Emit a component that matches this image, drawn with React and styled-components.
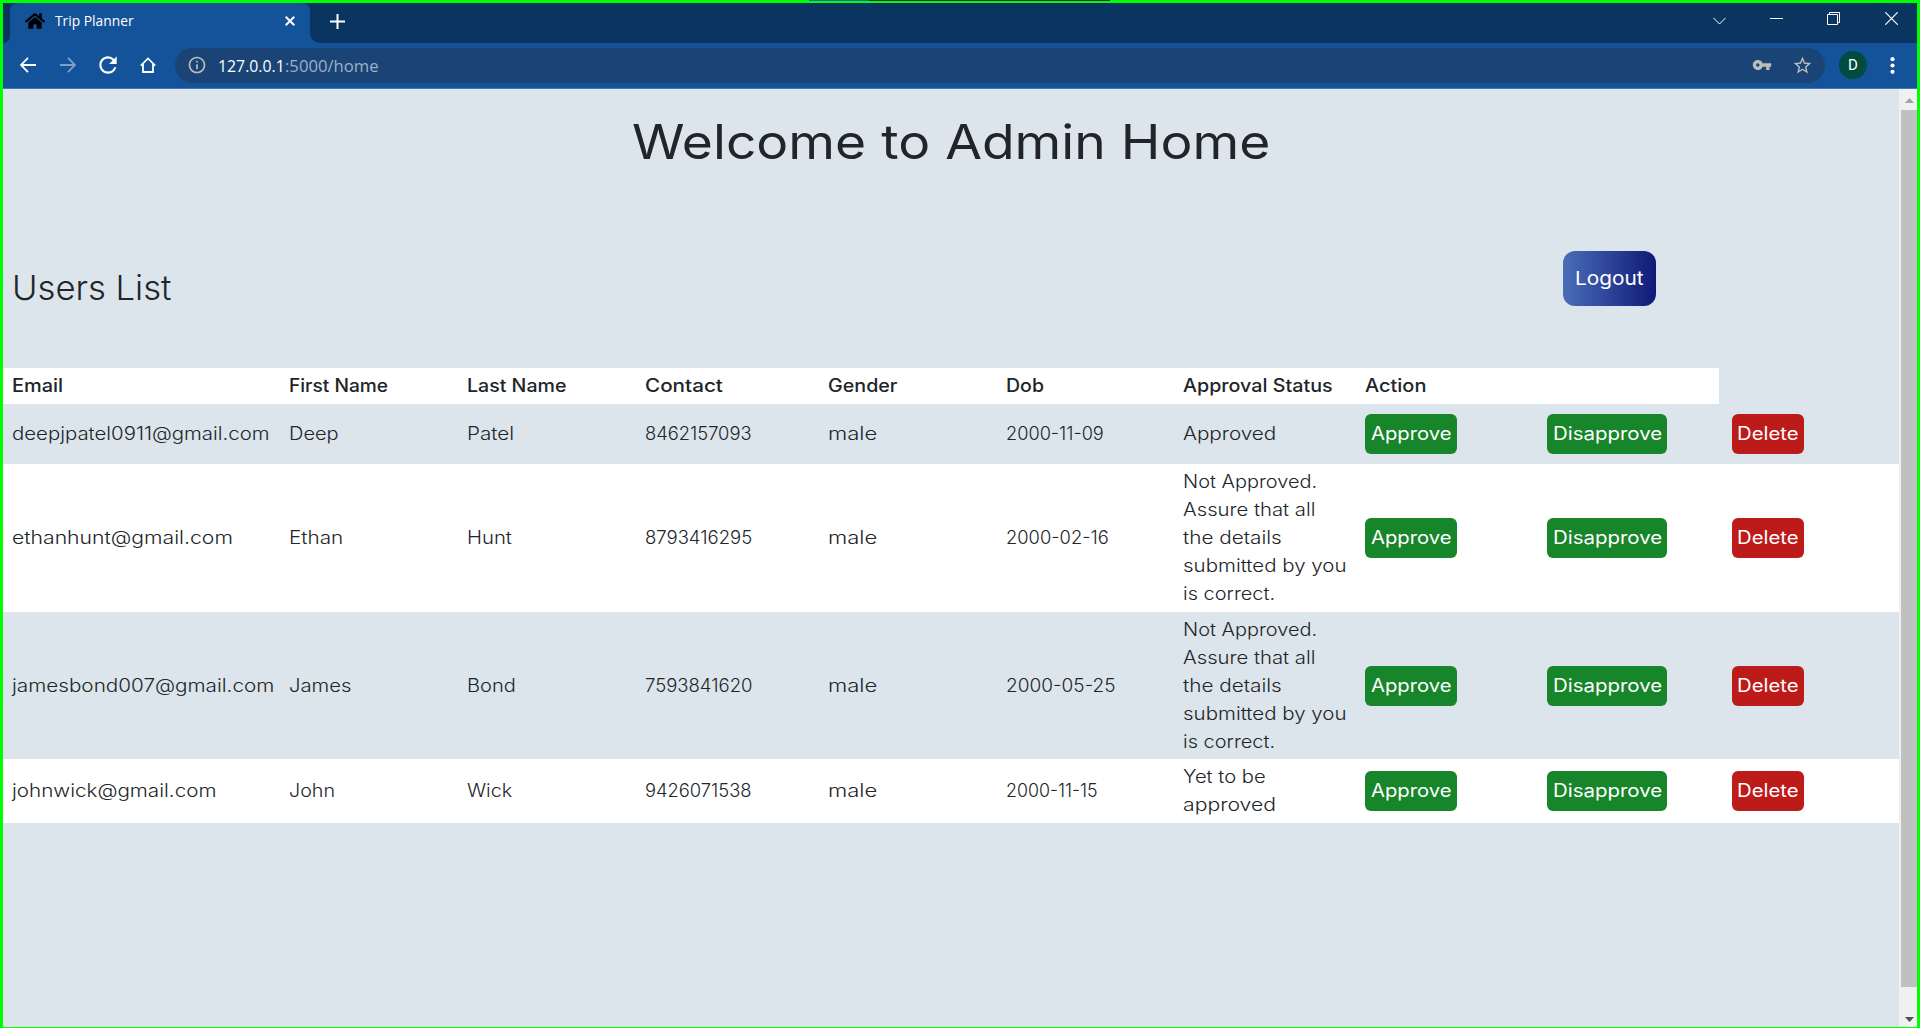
import React, { useLayoutEffect, useRef, useState } from "react";
import styled, { createGlobalStyle } from "styled-components";
import { FaHome } from "react-icons/fa";
import { MdRefresh, MdVpnKey, MdStarBorder, MdInfoOutline } from "react-icons/md";

const GlobalStyle = createGlobalStyle`
  * { box-sizing: border-box; }
  body {
    margin: 0;
    overflow: hidden;
    font-family: Inter, "Liberation Sans", sans-serif;
    color: #212529;
  }
  svg { display: block; flex: none; }
`;

const Window = styled.div`
  position: relative;
  display: flex;
  flex-direction: column;
  width: 1920px;
  height: 1028px;
  border: 3px solid #00ff00;
  border-bottom-width: 1px;
  background: #dce5eb;
`;

const EdgeMark = styled.div`
  position: absolute;
  top: -3px;
  left: 806px;
  width: 301px;
  height: 1px;
  background: linear-gradient(to right, #0a64ad 60px, #1c2a24 60px);
`;

const TabStrip = styled.div`
  display: flex;
  height: 40px;
  background: #0b3561;
`;

const TabEdge = styled.div`
  width: ${(p) => p.$width}px;
  background: #145299;
  &::before {
    content: "";
    display: block;
    height: 40px;
    background: #0b3561;
    border-radius: ${(p) => (p.$left ? "0 0 8px 0" : "0 0 0 10px")};
  }
`;

const Tab = styled.div`
  display: flex;
  align-items: center;
  width: 300px;
  padding: 0 15px 4px;
  background: #145299;
  border-radius: 8px 8px 0 0;
  color: #fff;
`;

const TabTitle = styled.div`
  flex: 1;
  padding: 0 0 0 10px;
  font: 14px/20px "Open Sans", "Noto Sans", sans-serif;
`;

const NewTab = styled.div`
  display: flex;
  flex: 1;
  padding: 11px 0 0 10px;
  color: #fff;
`;

const WindowControls = styled.div`
  display: flex;
  gap: 44px;
  padding: 9px 19px 0 0;
  color: #fff;
  svg:last-child { margin-left: 1px; }
`;

const Toolbar = styled.div`
  display: flex;
  align-items: center;
  height: 46px;
  padding: 0 0 1px 5px;
  background: #145299;
  border-bottom: 1px solid #4578b0;
  color: #fff;
`;

const NavButton = styled.div`
  display: flex;
  align-items: center;
  justify-content: center;
  width: 40px;
  height: 40px;
  opacity: ${(p) => (p.$dim ? 0.45 : 1)};
`;

const AddressBar = styled.div`
  display: flex;
  align-items: center;
  width: 1650px;
  height: 35px;
  margin-left: 7px;
  padding: 0 12px;
  border-radius: 18px;
  background: #194475;
  color: #bdbdbd;
`;

const Url = styled.div`
  flex: 1;
  padding: 1px 0 0 11px;
  font: 17px/24px "Open Sans", "Noto Sans", sans-serif;
  color: #9db1c8;
`;

const Host = styled.span`
  color: #fff;
`;

const KeySlot = styled.div`
  margin-right: 20px;
`;

const Avatar = styled.div`
  width: 28px;
  height: 28px;
  margin: 0 23px 0 14px;
  border-radius: 50%;
  background: #004d40;
  font: 15px/28px Roboto, sans-serif;
  text-align: center;
`;

const Viewport = styled.div`
  display: flex;
  flex: 1;
  min-height: 0;
`;

const Page = styled.main`
  flex: 1;
  min-width: 0;
`;

const Title = styled.h1`
  height: 79px;
  margin: 14px 0 0;
  text-align: center;
  font-size: 48px;
  font-weight: 400;
  line-height: 78px;
`;

const ListHeader = styled.div`
  display: flex;
  justify-content: space-between;
  height: 186px;
  padding: 69px 243px 0 9px;
`;

const ListTitle = styled.h2`
  margin: 12px 0 0;
  height: 50px;
  font-size: 34px;
  font-weight: 300;
  line-height: 50px;
`;

const LogoutButton = styled.button`
  width: 93px;
  height: 55px;
  padding: 0;
  border: 0;
  border-radius: 12px;
  background: linear-gradient(to right, #4a6db8, #0f1a78);
  color: #fff;
  font: 400 19px/53px Inter, sans-serif;
  text-align: center;
`;

const Table = styled.div`
  display: flex;
  flex-direction: column;
`;

const columns = "277px 178px 178px 183px 178px 177px 182px 182px 185px 1fr";

const HeadRow = styled.div`
  display: grid;
  grid-template-columns: ${columns};
  width: 1716px;
  height: 36px;
  background: #fff;
  font-size: 18px;
  font-weight: 500;
`;

const Row = styled.div`
  display: grid;
  grid-template-columns: ${columns};
  height: ${(p) => p.$height}px;
  background: ${(p) => (p.$white ? "#fff" : "transparent")};
  font-size: 18px;
  font-weight: 300;
`;

const Cell = styled.div`
  display: flex;
  flex-direction: column;
  justify-content: center;
  align-items: flex-start;
  padding-left: 9px;
  line-height: 28px;
`;

const ActionButton = styled.button`
  width: ${(p) => p.$width}px;
  height: 40px;
  padding: 0;
  border: 0;
  border-radius: 6px;
  background: ${(p) => (p.$danger ? "#bd1a1a" : "#178529")};
  color: #fff;
  font: 400 18px/40px Inter, sans-serif;
  text-align: center;
`;

const Scrollbar = styled.div`
  display: flex;
  flex-direction: column;
  justify-content: space-between;
  width: 18px;
  padding: 9px 0 5px 2px;
  background: #f0f0f0;
`;

const ScrollThumb = styled.div`
  height: 877px;
  margin-top: 7px;
  margin-bottom: auto;
  background: #c0c0c0;
`;

const Arrow = styled.div`
  width: 9px;
  height: 5px;
  margin-left: 4px;
  background: ${(p) => (p.$down ? "#505050" : "#a3a3a3")};
  clip-path: ${(p) =>
    p.$down ? "polygon(0 0, 100% 0, 50% 100%)" : "polygon(50% 0, 100% 100%, 0 100%)"};
`;

const TextBox = styled.span`
  display: inline-block;
  width: ${(p) => p.$width}px;
  text-align: left;
  vertical-align: top;
`;

const TextRun = styled.span`
  display: inline-block;
  vertical-align: top;
  white-space: pre;
  transform-origin: 0 50%;
`;

/* Stretches a run of text sideways so that it spans the given width. */
function Fitted({ width, children }) {
  const ref = useRef(null);
  const [scale, setScale] = useState(1);
  useLayoutEffect(() => {
    setScale(width / ref.current.offsetWidth);
  }, [width]);
  return (
    <TextBox $width={width}>
      <TextRun ref={ref} style={{ transform: `scaleX(${scale})` }}>
        {children}
      </TextRun>
    </TextBox>
  );
}

const headings = [
  ["Email", 51],
  ["First Name", 99],
  ["Last Name", 99],
  ["Contact", 78],
  ["Gender", 70],
  ["Dob", 38],
  ["Approval Status", 150],
  ["Action", 61],
];

const notApproved = [
  ["Not Approved.", 134],
  ["Assure that all", 133],
  ["the details", 99],
  ["submitted by you", 164],
  ["is correct.", 92],
];

const users = [
  {
    height: 60,
    cells: [
      ["deepjpatel0911@gmail.com", 257],
      ["Deep", 50],
      ["Patel", 47],
      ["8462157093", 107],
      ["male", 49],
      ["2000-11-09", 98],
    ],
    status: [["Approved", 93]],
  },
  {
    height: 148,
    cells: [
      ["ethanhunt@gmail.com", 221],
      ["Ethan", 54],
      ["Hunt", 45],
      ["8793416295", 107],
      ["male", 49],
      ["2000-02-16", 103],
    ],
    status: notApproved,
  },
  {
    height: 147,
    cells: [
      ["jamesbond007@gmail.com", 262],
      ["James", 63],
      ["Bond", 49],
      ["7593841620", 107],
      ["male", 49],
      ["2000-05-25", 110],
    ],
    status: notApproved,
  },
  {
    height: 64,
    cells: [
      ["johnwick@gmail.com", 204],
      ["John", 46],
      ["Wick", 45],
      ["9426071538", 107],
      ["male", 49],
      ["2000-11-15", 92],
    ],
    status: [
      ["Yet to be", 83],
      ["approved", 93],
    ],
  },
];

const Stroke = ({ w, h, d, sw = 2 }) => (
  <svg width={w} height={h} viewBox={`0 0 ${w} ${h}`} fill="none" stroke="currentColor" strokeWidth={sw}>
    <path d={d} />
  </svg>
);

export default function App() {
  return (
    <>
      <GlobalStyle />
      <Window>
        <EdgeMark />
        <TabStrip>
          <TabEdge $left $width={7} />
          <Tab>
            <FaHome size={20} color="#000" />
            <TabTitle>
              <Fitted width={79}>Trip Planner</Fitted>
            </TabTitle>
            <Stroke w={10} h={10} d="M0.7 0.7 9.3 9.3M9.3 0.7 0.7 9.3" />
          </Tab>
          <TabEdge $width={10} />
          <NewTab>
            <Stroke w={15} h={15} d="M7.5 0V15M0 7.5H15" />
          </NewTab>
          <WindowControls>
            <Stroke w={13} h={13} sw={1} d="M0.4 5.9 6.5 12 12.6 5.9" />
            <Stroke w={13} h={13} sw={1} d="M0 6.5H13" />
            <Stroke w={13} h={13} sw={1} d="M0.5 2.5H10.5V12.5H0.5ZM2.5 2.5V0.5H12.5V10.5H10.5" />
            <Stroke w={13} h={13} sw={1.2} d="M0.3 0.3 12.7 12.7M12.7 0.3 0.3 12.7" />
          </WindowControls>
        </TabStrip>
        <Toolbar>
          <NavButton>
            <Stroke w={16} h={16} sw={1.8} d="M16 8H1.6M8 0.8 0.9 8 8 15.2" />
          </NavButton>
          <NavButton $dim>
            <Stroke w={16} h={16} sw={1.8} d="M0 8H14.4M8 0.8 15.1 8 8 15.2" />
          </NavButton>
          <NavButton>
            <MdRefresh size={26} />
          </NavButton>
          <NavButton>
            <Stroke w={16} h={16} sw={1.8} d="M0.8 8.6 8 1.4 15.2 8.6M3 7V15H13V7" />
          </NavButton>
          <AddressBar>
            <MdInfoOutline size={20} />
            <Url>
              <Host>
                <Fitted width={67}>127.0.0.1</Fitted>
              </Host>
              <Fitted width={94}>:5000/home</Fitted>
            </Url>
            <KeySlot>
              <MdVpnKey size={20} />
            </KeySlot>
            <MdStarBorder size={21} />
          </AddressBar>
          <Avatar>D</Avatar>
          <svg width="5" height="17" viewBox="0 0 5 17" fill="currentColor">
            <circle cx="2.5" cy="2.2" r="2.1" />
            <circle cx="2.5" cy="8.5" r="2.1" />
            <circle cx="2.5" cy="14.8" r="2.1" />
          </svg>
        </Toolbar>
        <Viewport>
          <Page>
            <Title>
              <Fitted width={638}>Welcome to Admin Home</Fitted>
            </Title>
            <ListHeader>
              <ListTitle>
                <Fitted width={159}>Users List</Fitted>
              </ListTitle>
              <LogoutButton>
                <Fitted width={69}>Logout</Fitted>
              </LogoutButton>
            </ListHeader>
            <Table>
              <HeadRow>
                {headings.map(([text, width]) => (
                  <Cell key={text}>
                    <Fitted width={width}>{text}</Fitted>
                  </Cell>
                ))}
              </HeadRow>
              {users.map((user, i) => (
                <Row key={i} $height={user.height} $white={i % 2 === 1}>
                  {user.cells.map(([text, width]) => (
                    <Cell key={text}>
                      <Fitted width={width}>{text}</Fitted>
                    </Cell>
                  ))}
                  <Cell>
                    {user.status.map(([text, width]) => (
                      <Fitted key={text} width={width}>
                        {text}
                      </Fitted>
                    ))}
                  </Cell>
                  <Cell>
                    <ActionButton $width={92}>
                      <Fitted width={81}>Approve</Fitted>
                    </ActionButton>
                  </Cell>
                  <Cell>
                    <ActionButton $width={120}>
                      <Fitted width={109}>Disapprove</Fitted>
                    </ActionButton>
                  </Cell>
                  <Cell>
                    <ActionButton $width={72} $danger>
                      <Fitted width={62}>Delete</Fitted>
                    </ActionButton>
                  </Cell>
                </Row>
              ))}
            </Table>
          </Page>
          <Scrollbar>
            <Arrow />
            <ScrollThumb />
            <Arrow $down />
          </Scrollbar>
        </Viewport>
      </Window>
    </>
  );
}
